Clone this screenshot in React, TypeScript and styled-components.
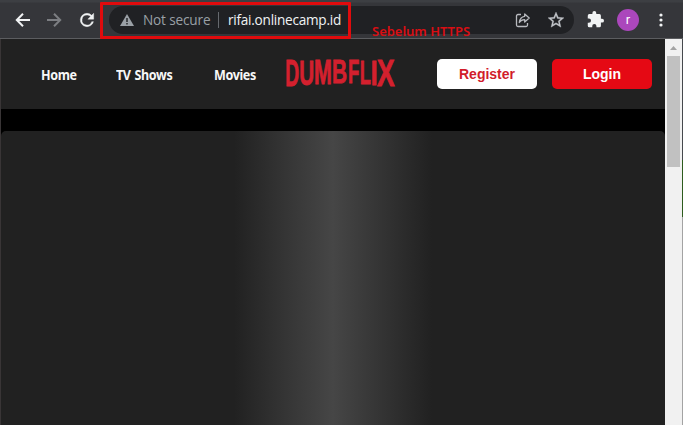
import React from "react";
import styled, { createGlobalStyle } from "styled-components";

const Global = createGlobalStyle`
  * { box-sizing: border-box; }
  body { margin: 0; background: #212121; overflow: hidden; }
`;
const Window = styled.div`
  position: relative;
  width: 683px;
  height: 425px;
  display: flex;
  flex-direction: column;
  overflow: hidden;
  background: #212121;
  font-family: "Open Sans", sans-serif;
`;
const Toolbar = styled.header`
  height: 39px;
  flex: none;
  display: flex;
  align-items: center;
  padding: 1px 13px 0 14px;
  background: linear-gradient(#3d3f43 0 2px, #35363a 3px);
  border-bottom: 1px solid #5c5d60;
`;
const IconBox = styled.span<{ $gap: number }>`
  display: flex;
  flex: none;
  margin-right: ${(p) => p.$gap}px;
  svg { display: block; }
`;
const Omnibox = styled.div`
  width: 465px;
  height: 28px;
  margin-right: 13px;
  padding: 0 10px 0 11px;
  flex: none;
  display: flex;
  align-items: center;
  border-radius: 14px;
  background: #202124;
  font-size: 13.6px;
  white-space: nowrap;
`;
const Security = styled.span`
  width: 75px;
  color: #9aa0a6;
  letter-spacing: -0.15px;
`;
const Separator = styled.span`
  width: 1px;
  height: 16px;
  background: #66696e;
  margin-right: 9px;
`;
const Address = styled.span`
  flex: 1;
  color: #f1f3f4;
  letter-spacing: -0.25px;
`;
const Avatar = styled.span`
  width: 22px;
  height: 22px;
  margin-right: 20px;
  display: flex;
  align-items: center;
  justify-content: center;
  border-radius: 50%;
  background: #ab47bc;
  color: #fff;
  font: 13px/20px Roboto, sans-serif;
`;
const Highlight = styled.div`
  position: absolute;
  left: 100px;
  top: 2px;
  width: 251px;
  height: 37px;
  border: 3px solid #e00b0d;
  border-radius: 1px;
`;
const Note = styled.div`
  position: absolute;
  left: 372px;
  top: 22px;
  font: 600 13px/18px "Noto Sans", sans-serif;
  letter-spacing: -0.02px;
  color: #d90e13;
  white-space: nowrap;
`;
const Viewport = styled.div`
  flex: 1;
  min-height: 0;
  display: flex;
  border-left: 1px solid #393536;
`;
const Page = styled.main`
  width: 664px;
  flex: none;
  display: flex;
  flex-direction: column;
  background: #000;
`;
const NavBar = styled.nav`
  height: 70px;
  flex: none;
  display: flex;
  align-items: center;
  padding-left: 40px;
  background: #212121;
`;
const NavItem = styled.a<{ $slot: number }>`
  width: ${(p) => p.$slot}px;
  flex: none;
  span {
    display: inline-block;
    transform: scaleX(0.93);
    transform-origin: left;
    font: 700 13.5px/20px "Noto Sans", sans-serif;
    letter-spacing: -0.4px;
    word-spacing: 1px;
    color: #f7f7f7;
    white-space: nowrap;
  }
`;
const Logo = styled.svg`
  display: block;
  flex: none;
  width: 112px;
  height: 70px;
  margin-right: 40px;
`;
const Button = styled.button<{ $primary?: boolean }>`
  width: 100px;
  height: 30px;
  margin-right: 15px;
  padding: 0;
  flex: none;
  border: 0;
  border-radius: 5px;
  background: ${(p) => (p.$primary ? "#e50914" : "#fff")};
  color: ${(p) => (p.$primary ? "#fff" : "#d11c2a")};
  font: 700 14px/30px "Liberation Sans", Arial, sans-serif;
`;
const Hero = styled.section`
  flex: 1;
  margin-top: 22px;
  border-radius: 5px 5px 0 0;
  background: linear-gradient(90deg, #212121 233px, #353535 285px, #464646 332px, #353535 377px, #212121 431px);
`;
const Scrollbar = styled.aside`
  width: 17px;
  flex: none;
  display: flex;
  flex-direction: column;
  align-items: center;
  background: #f1f1f1;
`;
const ScrollArrow = styled.svg`
  display: block;
  width: 17px;
  height: 17px;
`;
const Thumb = styled.div`
  width: 13px;
  height: 111px;
  background: #c1c1c1;
`;
const Edge = styled.div`
  width: 1px;
  flex: none;
  background: linear-gradient(#46494d 0 121px, #2d5c1d 121px 178px, #a3a3a3 178px);
`;

// Each letter: left and right edge, baseline, and its ink extent at 20px.
const letters = [
  { c: "D", x: 1.5, r: 13.5, base: 47, ink: [1.37, 13.8] },
  { c: "U", x: 15.6, r: 28, base: 46, ink: [1.2, 13.2] },
  { c: "M", x: 30.5, r: 45.5, base: 45, ink: [1.37, 15.3] },
  { c: "B", x: 48.5, r: 61.3, base: 44.2, ink: [1.37, 13.6] },
  { c: "F", x: 64.2, r: 73.6, base: 44, ink: [1.37, 11.5] },
  { c: "L", x: 76, r: 85.4, base: 44.5, ink: [1.37, 11.6] },
  { c: "I", x: 87.5, r: 91, base: 45.5, ink: [1.37, 4.2] },
  { c: "X", x: 92.5, r: 109, base: 47, ink: [0.4, 12.9] },
];
const logoTop = 21.4;

export default function App() {
  return (
    <>
      <Global />
      <Window>
        <Toolbar>
          <IconBox $gap={13}>
            <svg width="18" height="18" viewBox="0 0 18 18" fill="none" stroke="#f1f3f4" strokeWidth="2"><path d="M16 9H3M9 2.8 2.8 9 9 15.2" /></svg>
          </IconBox>
          <IconBox $gap={14}>
            <svg width="18" height="18" viewBox="0 0 18 18" fill="none" stroke="#7c7e82" strokeWidth="2"><path d="M2 9h13M9 2.8 15.2 9 9 15.2" /></svg>
          </IconBox>
          <IconBox $gap={12}>
            <svg width="20" height="20" viewBox="0 0 24 24" fill="#f1f3f4"><path d="M17.65 6.35A7.96 7.96 0 0 0 12 4a8 8 0 1 0 7.73 10h-2.08A6 6 0 1 1 12 6c1.66 0 3.14.69 4.22 1.78L13 11h7V4z" stroke="#f1f3f4" strokeWidth=".5" /></svg>
          </IconBox>
          <Omnibox>
            <IconBox $gap={9}>
              <svg width="14" height="14" viewBox="0 0 14 14"><path d="M7 1 14 13H0z" fill="#9aa0a6" /><path d="M6.3 5h1.4v4H6.3zm0 5h1.4v1.4H6.3z" fill="#202124" /></svg>
            </IconBox>
            <Security>Not secure</Security>
            <Separator />
            <Address>rifai.onlinecamp.id</Address>
            <IconBox $gap={17}>
              <svg width="16" height="16" viewBox="0 0 16 16" fill="none" stroke="#b8babf" strokeWidth="1.3" strokeLinejoin="round"><path d="M6 2.5H3A1.5 1.5 0 0 0 1.5 4v9A1.5 1.5 0 0 0 3 14.5h8a1.5 1.5 0 0 0 1.5-1.5v-2" /><path d="M9.7 2 14.2 6 9.7 10V7.6C7 7.6 5.5 8.5 4.3 10.5 4.7 7 6.5 4.7 9.7 4.3z" /></svg>
            </IconBox>
            <IconBox $gap={0}>
              <svg width="16" height="16" viewBox="2 2 20 20" fill="#c4c7cb" stroke="#c4c7cb" strokeWidth=".4"><path d="m22 9.24-7.19-.62L12 2 9.19 8.63 2 9.24l5.46 4.73L5.82 21 12 17.27 18.18 21l-1.63-7.03zM12 15.4l-3.76 2.27 1-4.28-3.32-2.88 4.38-.38L12 6.1l1.71 4.04 4.38.38-3.32 2.88 1 4.28z" /></svg>
            </IconBox>
          </Omnibox>
          <IconBox $gap={13}>
            <svg width="17" height="17" viewBox="1 1 22 22" fill="#f1f3f4"><path d="M20.5 11H19V7a2 2 0 0 0-2-2h-4V3.5a2.5 2.5 0 0 0-5 0V5H4a2 2 0 0 0-2 2v3.8h1.5a2.7 2.7 0 0 1 0 5.4H2V20a2 2 0 0 0 2 2h3.8v-1.5a2.7 2.7 0 0 1 5.4 0V22H17a2 2 0 0 0 2-2v-4h1.5a2.5 2.5 0 0 0 0-5z" /></svg>
          </IconBox>
          <Avatar>r</Avatar>
          <svg width="4" height="16" viewBox="0 0 4 16" fill="#f1f3f4"><circle cx="2" cy="3" r="1.6" /><circle cx="2" cy="8" r="1.6" /><circle cx="2" cy="13" r="1.6" /></svg>
        </Toolbar>
        <Viewport>
          <Page>
            <NavBar>
              <NavItem $slot={75}><span>Home</span></NavItem>
              <NavItem $slot={98}><span>TV Shows</span></NavItem>
              <NavItem $slot={71}><span>Movies</span></NavItem>
              <Logo viewBox="0 0 112 70" aria-label="DUMBFLIX">
                {letters.map(({ c, x, r, base, ink }) => {
                  const sx = (r - x) / (ink[1] - ink[0]);
                  const sy = (base - logoTop) / 13.76;
                  return (
                    <text
                      key={c}
                      transform={`translate(${x - ink[0] * sx} ${base}) scale(${sx} ${sy})`}
                      fontFamily="Liberation Sans, Arial, sans-serif"
                      fontWeight="700"
                      fontSize="20"
                      fill="#d4202e"
                      stroke="#d4202e"
                      strokeWidth="0.5"
                    >
                      {c}
                    </text>
                  );
                })}
              </Logo>
              <Button>Register</Button>
              <Button $primary>Login</Button>
            </NavBar>
            <Hero />
          </Page>
          <Scrollbar>
            <ScrollArrow viewBox="0 0 17 17"><path d="M5 11 8.5 7 12 11z" fill="#a3a3a3" /></ScrollArrow>
            <Thumb />
          </Scrollbar>
          <Edge />
        </Viewport>
        <Highlight />
        <Note>Sebelum HTTPS</Note>
      </Window>
    </>
  );
}
